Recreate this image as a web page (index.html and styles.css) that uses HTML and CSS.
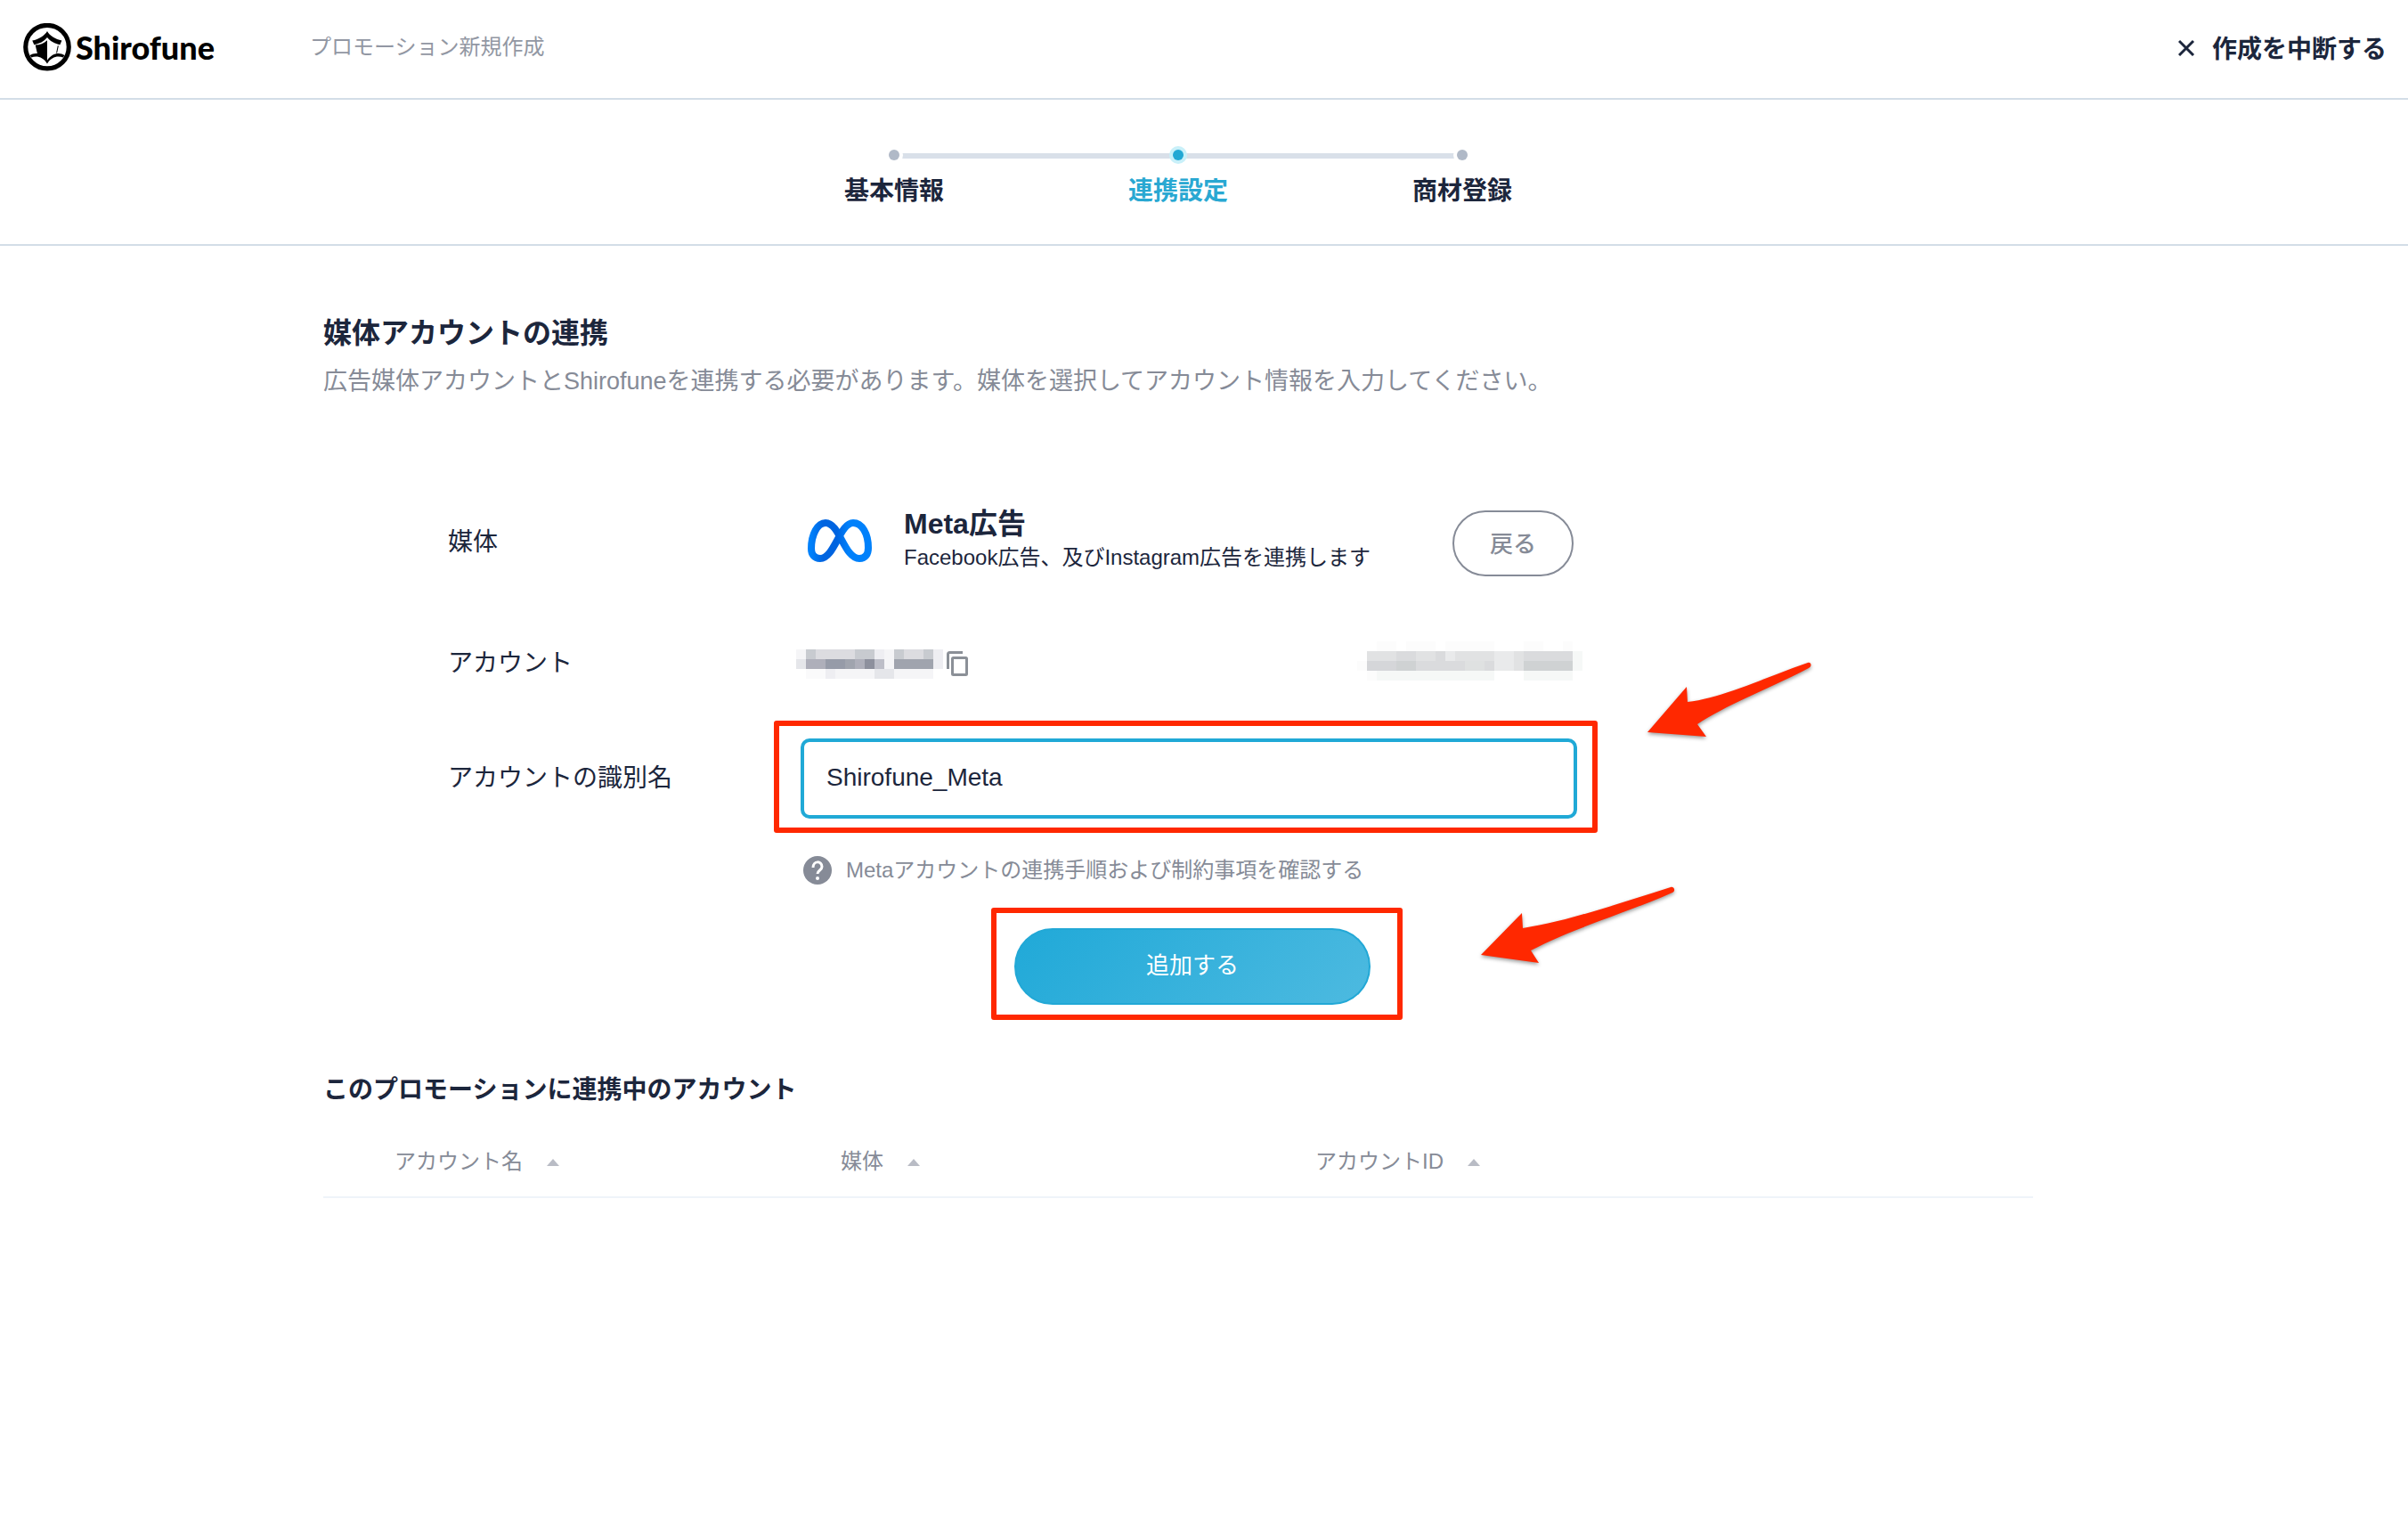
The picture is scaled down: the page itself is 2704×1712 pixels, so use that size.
FILE: index.html
```html
<!DOCTYPE html>
<html lang="ja">
<head>
  <meta charset="UTF-8" />
  <meta name="viewport" content="width=device-width, initial-scale=1.0"/>
  <title>プロモーション新規作成 | Shirofune</title>
  <link rel="stylesheet" href="styles.css">
</head>
<body>
  <header class="header">
    <a class="logo" href="#">
      <svg class="logo-mark" viewBox="20 20 158 158" aria-hidden="true">
        <circle cx="99" cy="98" r="71" fill="none" stroke="#000" stroke-width="15"/>
        <path d="M99 46 C92 59 72 73 50 77 L56 91 C73 88 89 80 99 67 C109 80 125 87 141 91 L147 77 C126 72 106 60 99 46Z"/>
        <path d="M60 92 L67 122 C78 124 90 134 99 150 L99 76 C89 86 74 91 60 92Z"/>
        <path d="M135 94 L130 118" fill="none" stroke="#000" stroke-width="3"/>
        <path d="M42 125 C58 115 82 116 99 142 C116 116 140 115 156 125 L151 133 C133 126 113 131 99 153 C85 131 65 126 47 133Z"/>
      </svg>
      <span>Shirofune</span>
    </a>
    <span class="breadcrumb">プロモーション新規作成</span>
    <button class="cancel" type="button">
      <svg width="20" height="20" viewBox="0 0 20 20" aria-hidden="true"><path d="M1 3L17 19M17 3L1 19" stroke="currentColor" stroke-width="3"/></svg>
      作成を中断する
    </button>
  </header>

  <nav class="stepper">
    <ol class="steps">
      <li class="step">基本情報</li>
      <li class="step active" aria-current="step">連携設定</li>
      <li class="step">商材登録</li>
    </ol>
  </nav>

  <main class="main">
    <h1>媒体アカウントの連携</h1>
    <p class="lead">広告媒体アカウントとShirofuneを連携する必要があります。媒体を選択してアカウント情報を入力してください。</p>

    <form class="form">
      <div class="row media-row">
        <span class="label">媒体</span>
        <div class="media">
          <svg class="meta-icon" viewBox="0 0 72 48" aria-hidden="true">
            <defs>
              <linearGradient id="metaBlue" x1="0" y1="0" x2="1" y2="0">
                <stop offset="0" stop-color="#0081fb"/>
                <stop offset="0.2" stop-color="#0064e0"/>
                <stop offset="0.45" stop-color="#0064e0"/>
                <stop offset="0.65" stop-color="#0081fb"/>
              </linearGradient>
            </defs>
            <path d="M4 33 C4 17 11 4 20 4 C36 4 41 44 58 44 C65 44 68 39 68 32 C68 16 61 4 51 4 C36 4 30 44 14 44 C7 44 4 39 4 33Z" fill="none" stroke="url(#metaBlue)" stroke-width="8"/>
          </svg>
          <div class="media-text">
            <h2>Meta広告</h2>
            <p>Facebook広告、及びInstagram広告を連携します</p>
          </div>
          <button class="back" type="button">戻る</button>
        </div>
      </div>

      <div class="row account-row">
        <span class="label">アカウント</span>
        <div class="account">
          <!-- masked account name -->
          <svg class="mask" width="165" height="33" viewBox="0 0 15 3" preserveAspectRatio="none" shape-rendering="crispEdges" aria-hidden="true">
            <path fill="#f5f5f7" d="M0 0h1v1h-1zM9 0h1v1h-1zM9 1h1v1h-1zM4 2h4v1h-4zM10 2h4v1h-4z"/>
            <path fill="#c8cbd0" d="M1 0h1v1h-1zM6 0h2v1h-2zM10 0h1v1h-1zM13 0h1v1h-1z"/>
            <path fill="#dcdce0" d="M2 0h4v1h-4zM11 0h2v1h-2z"/>
            <path fill="#eeeef2" d="M8 0h1v1h-1zM14 0h1v2h-1zM3 2h1v1h-1z"/>
            <path fill="#e5e6ea" d="M0 1h1v1h-1zM8 2h2v1h-2z"/>
            <path fill="#aeafba" d="M1 1h2v1h-2zM6 1h1v1h-1z"/>
            <path fill="#969ba8" d="M3 1h2v1h-2z"/>
            <path fill="#a0a4ae" d="M5 1h1v1h-1zM10 1h4v1h-4z"/>
            <path fill="#8d909d" d="M7 1h1v1h-1z"/>
            <path fill="#bdbec8" d="M8 1h1v1h-1z"/>
            <path fill="#fafafb" d="M1 2h2v1h-2z"/>
          </svg>
          <button class="copy" type="button" aria-label="コピー">
            <svg width="24" height="28" viewBox="0 0 24 28" fill="none" stroke="#8b9097" stroke-width="3" aria-hidden="true">
              <path d="M1.5 20V3.500q0-2 2-2H18"/>
              <rect x="6.500" y="7.500" width="16" height="19" rx="1"/>
            </svg>
          </button>
          <!-- masked account id -->
          <svg class="mask mask-id" width="253" height="44" viewBox="0 0 23 4" preserveAspectRatio="none" shape-rendering="crispEdges" aria-hidden="true">
            <path fill="#fcfcfc" d="M2 0h2v1h-2zM5 0h3v1h-3zM9 0h5v1h-5zM17 0h2v1h-2zM21 0h1v1h-1zM0 2h1v1h-1zM1 3h1v1h-1z"/>
            <path fill="#e1e2e3" d="M1 1h3v1h-3zM6 1h2v1h-2zM10 1h4v1h-4zM16 1h1v2h-1z"/>
            <path fill="#dadbdd" d="M4 1h2v1h-2zM8 1h1v1h-1zM17 1h5v1h-5zM6 2h5v1h-5zM13 2h1v1h-1z"/>
            <path fill="#e9eaeb" d="M9 1h1v1h-1zM14 1h2v2h-2z"/>
            <path fill="#d5d6d9" d="M1 2h3v1h-3z"/>
            <path fill="#cfd2d3" d="M4 2h2v1h-2zM17 2h5v1h-5z"/>
            <path fill="#dfe1e1" d="M11 2h2v1h-2z"/>
            <path fill="#f6f8f7" d="M22 1h1v2h-1zM2 3h12v1h-12zM17 3h5v1h-5z"/>
          </svg>
        </div>
      </div>

      <div class="row name-row">
        <label class="label" for="accountName">アカウントの識別名</label>
        <div class="field">
          <input id="accountName" type="text" value="Shirofune_Meta">
          <span class="frame"></span>
          <svg class="arrow" viewBox="0 0 210 105" aria-hidden="true">
            <path d="M11 87 L55 36 L56 53 C94 49 142 26 191 9 C195 8 196 13 192 15 C154 35 98 57 67 78 L77 92Z"/>
          </svg>
        </div>
      </div>

      <a class="help" href="#">
        <svg width="32" height="32" viewBox="0 0 32 32" aria-hidden="true">
          <circle cx="16" cy="16" r="16" fill="#868b97"/>
          <path d="M11 13C11 5 21 5 21 12C21 16 16 16 16 20" fill="none" stroke="#fff" stroke-width="3"/>
          <circle cx="16" cy="25" r="2" fill="#fff"/>
        </svg>
        Metaアカウントの連携手順および制約事項を確認する
      </a>

      <div class="submit">
        <button class="add" type="button">追加する</button>
        <span class="frame"></span>
        <svg class="arrow" viewBox="0 0 240 110" aria-hidden="true">
          <path d="M9 87 L55 40 L56 57 C108 49 164 29 222 11 C226 10 228 15 224 17 C180 37 112 57 65 82 L74 96Z"/>
        </svg>
      </div>
    </form>

    <section class="linked">
      <h2>このプロモーションに連携中のアカウント</h2>
      <table>
        <thead>
          <tr>
            <th class="col-name" scope="col">アカウント名<span class="sort"></span></th>
            <th class="col-media" scope="col">媒体<span class="sort"></span></th>
            <th class="col-id" scope="col">アカウントID<span class="sort"></span></th>
          </tr>
        </thead>
      </table>
    </section>
  </main>
</body>
</html>
```

FILE: styles.css
```css
* {
  box-sizing: border-box;
}

body {
  margin: 0;
  font-family: "Liberation Sans", "Noto Sans CJK JP", sans-serif;
  font-size: 28px;
  line-height: 40px;
  color: #1c263c;
  background-color: #fff;
}

h1, h2, p, ol {
  margin: 0;
  padding: 0;
}

button {
  font-family: inherit;
  cursor: pointer;
}

/* header */
.header {
  display: flex;
  align-items: center;
  height: 112px;
  padding: 0 24px 4px 26px;
  border-bottom: 2px solid #d3dde7;
}

.logo {
  display: flex;
  align-items: center;
  gap: 5px;
  width: 322px;
  font-family: Lato, sans-serif;
  font-size: 36px;
  font-weight: 900;
  color: #000;
  text-decoration: none;
}

.logo-mark {
  width: 54px;
  height: 54px;
}

.breadcrumb {
  font-size: 24px;
  color: #9297a3;
}

.cancel {
  display: flex;
  align-items: center;
  gap: 18px;
  margin-left: auto;
  padding: 0;
  border: none;
  background: none;
  font-size: 28px;
  font-weight: bold;
  color: inherit;
}

/* stepper */
.stepper {
  height: 164px;
  padding: 54px 58px 0 0;
  border-bottom: 2px solid #d3dde7;
}

.steps {
  display: flex;
  justify-content: center;
  list-style: none;
}

.step {
  position: relative;
  width: 319px;
  padding-top: 29px;
  font-weight: bold;
  line-height: 40px;
  text-align: center;
}

.step::before {
  content: "";
  position: absolute;
  top: 2px;
  left: calc(50% - 6px);
  z-index: 1;
  width: 12px;
  height: 12px;
  border-radius: 50%;
  background: #b0b9c7;
  box-shadow: 0 0 0 4px #fff;
}

.step + .step::after {
  content: "";
  position: absolute;
  top: 6px;
  right: 50%;
  width: 100%;
  height: 6px;
  background: #d9e0e9;
}

.step.active {
  color: #29a8d2;
}

.step.active::before {
  background: #22a8d4;
  box-shadow: 0 0 0 4px #c9f0f9;
}

/* main */
.main {
  max-width: 2342px;
  margin: 0 auto;
  padding: 74px 240px 0 182px;
}

h1 {
  font-size: 32px;
  line-height: 48px;
}

.lead {
  margin-top: 10px;
  font-size: 27px;
  color: #868b97;
}

.form {
  width: 1408px;
  margin: 120px 0 0 140px;
}

.row {
  display: grid;
  grid-template-columns: 396px 872px;
  align-items: center;
}

.media-row .label {
  padding-bottom: 2px;
}

.media {
  display: flex;
  align-items: center;
  padding: 0 4px 0 8px;
}

.meta-icon {
  width: 72px;
  height: 48px;
  margin: 0 36px 6px 0;
}

.media-text {
  padding-bottom: 8px;
}

.media-text h2 {
  font-size: 32px;
  line-height: 40px;
}

.media-text p {
  font-size: 24px;
  line-height: 36px;
}

.back {
  width: 136px;
  height: 74px;
  margin-left: auto;
  padding: 0 0 4px;
  border: 2px solid #868b97;
  border-radius: 37px;
  background: #fff;
  font-size: 26px;
  font-weight: 500;
  color: #868b97;
}

.account-row {
  margin-top: 73px;
}

.account {
  display: flex;
  align-items: center;
  height: 40px;
  margin-right: -6px;
}

.mask {
  flex: none;
  margin-left: -5px;
}

.mask-id {
  margin: 0 0 6px auto;
}

.copy {
  display: flex;
  margin-left: 4px;
  padding: 0;
  border: none;
  background: none;
}

.name-row {
  margin-top: 64px;
}

.field {
  position: relative;
}

.field input {
  display: block;
  width: 100%;
  height: 90px;
  padding: 0 25px 2px;
  border: 4px solid #20a9d6;
  border-radius: 10px;
  outline: none;
  font-family: inherit;
  font-size: 28px;
  color: inherit;
}

/* red marks over the controls */
.frame {
  position: absolute;
  border: 6px solid #ff2800;
  border-radius: 3px;
  pointer-events: none;
}

.field .frame {
  inset: -20px -23px -16px -30px;
}

.arrow {
  position: absolute;
  fill: #ff2800;
  filter: drop-shadow(0 2px 2px rgba(0, 0, 0, 0.4));
  pointer-events: none;
}

.field .arrow {
  top: -94px;
  left: 940px;
  width: 210px;
  height: 105px;
}

.help {
  display: flex;
  align-items: center;
  gap: 16px;
  width: max-content;
  margin: 38px 0 0 399px;
  font-size: 24px;
  color: #868b97;
  text-decoration: none;
}

.submit {
  position: relative;
  width: 400px;
  margin: 45px 0 0 636px;
}

.add {
  display: block;
  width: 100%;
  height: 86px;
  padding-bottom: 8px;
  border: 2px solid #22a8d6;
  border-radius: 43px;
  background: linear-gradient(135deg, #20a9d8, #4dbae0);
  font-size: 26px;
  color: #fff;
}

.submit .frame {
  inset: -23px -36px -17px -26px;
}

.submit .arrow {
  top: -57px;
  left: 515px;
  width: 240px;
  height: 110px;
}

/* linked accounts */
.linked {
  margin-top: 76px;
}

.linked h2 {
  font-size: 28px;
}

.linked table {
  width: 100%;
  margin-top: 20px;
  border-collapse: collapse;
  table-layout: fixed;
}

.linked th {
  height: 80px;
  padding: 0;
  border-bottom: 2px solid #eff4f9;
  font-size: 24px;
  font-weight: normal;
  text-align: left;
  color: #868b97;
}

.linked .col-name {
  width: 581px;
  padding-left: 80px;
}

.linked .col-media {
  width: 533px;
}

.sort {
  display: inline-block;
  margin-left: 27px;
  border: 7px solid transparent;
  border-top: none;
  border-bottom: 8px solid #b9bcc5;
  vertical-align: middle;
}
```
